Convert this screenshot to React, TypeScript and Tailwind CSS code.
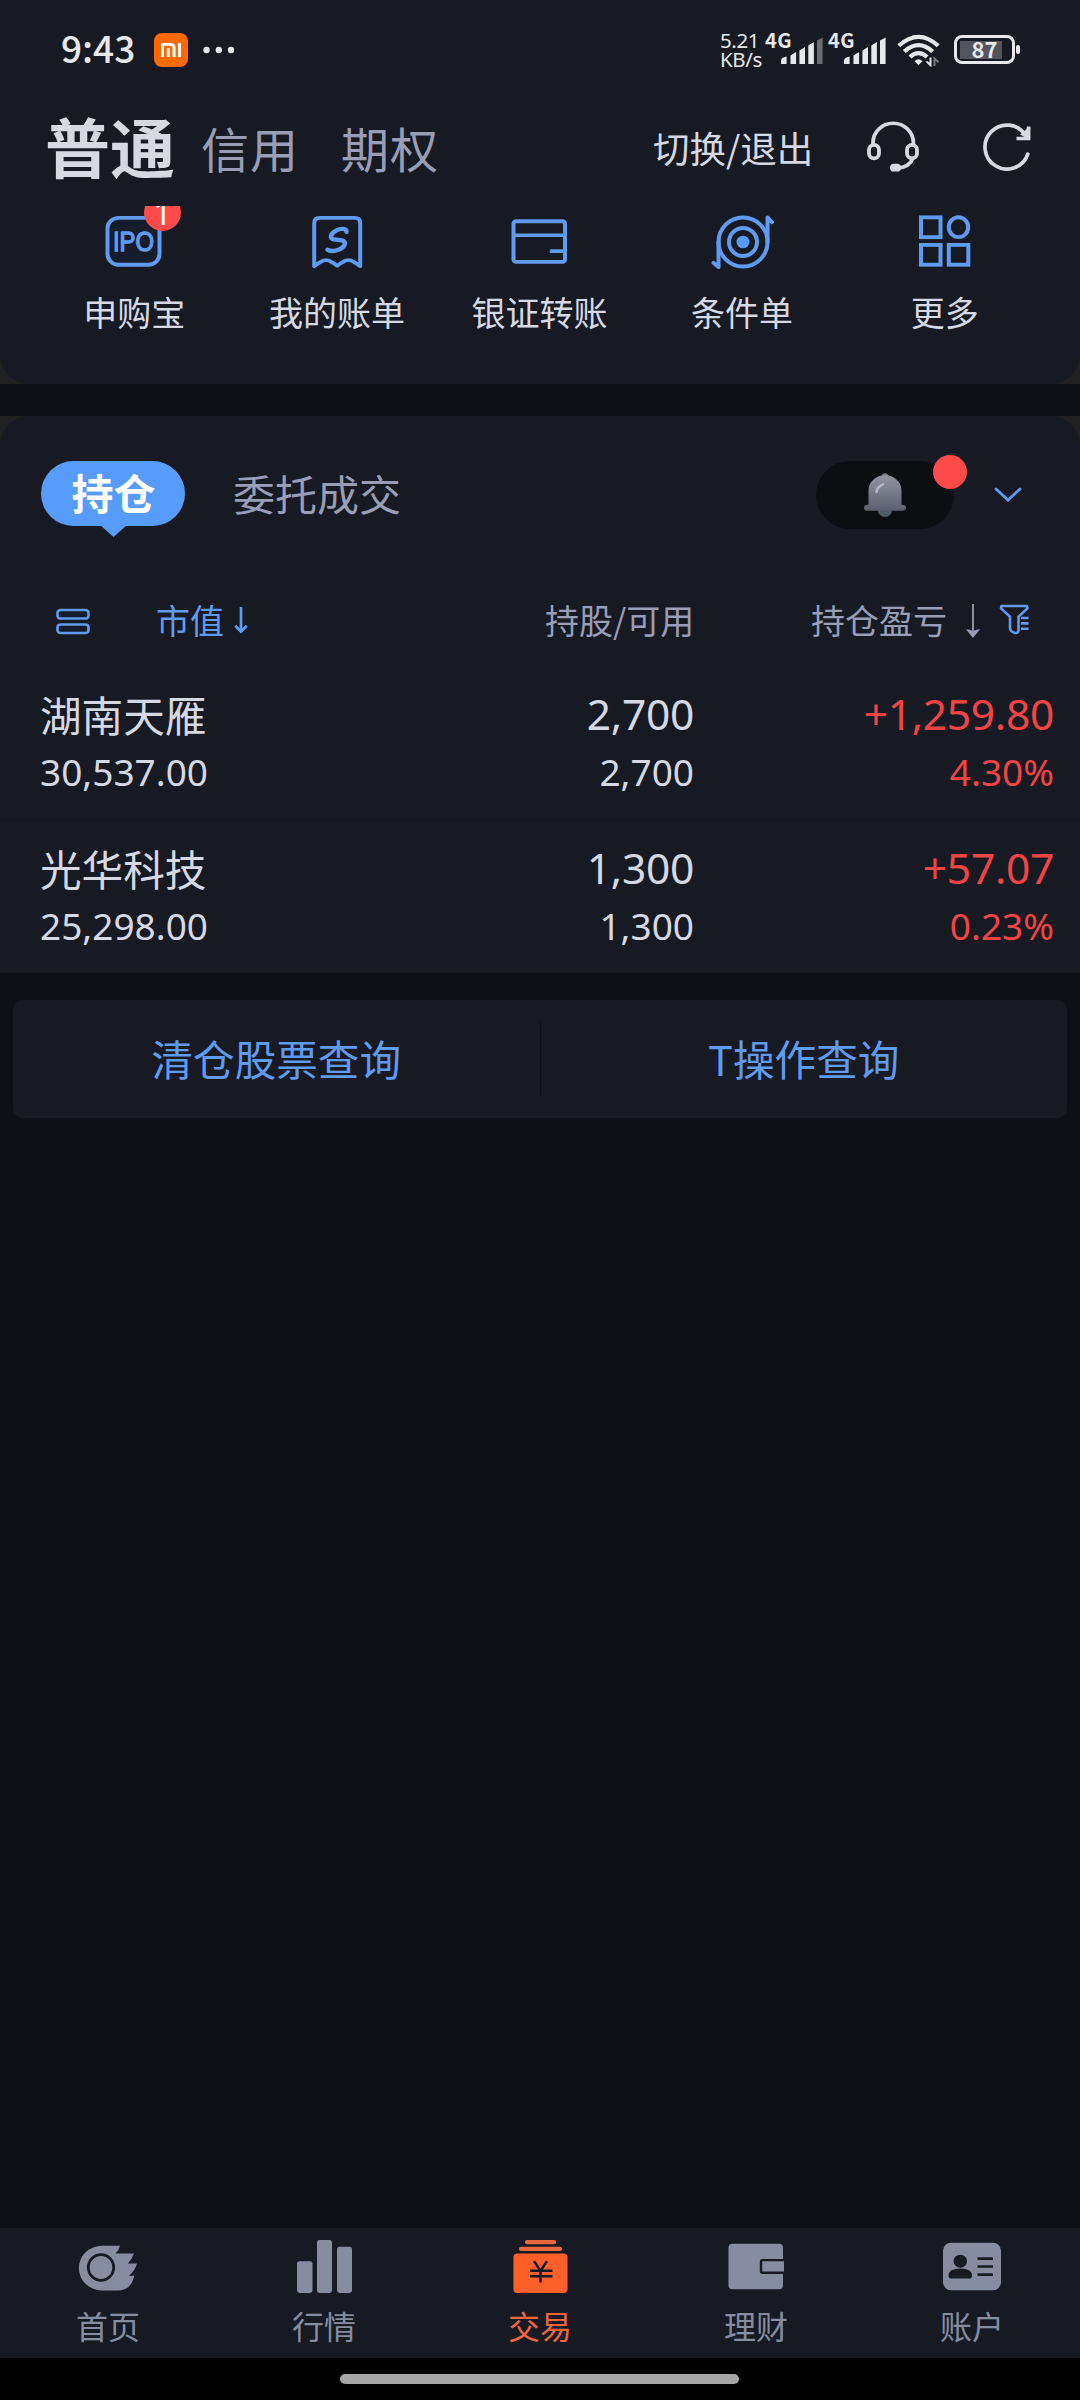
import React from "react";

const BLUE = "#5f9bf0";

const Signal = ({ weak }: { weak?: boolean }) => (
  <div className="relative h-[33px] w-[58px]">
    <span className="absolute left-0 top-[-5px] text-[20px] font-bold leading-[21px] tracking-[0.500px]">4G</span>
    <svg className="absolute inset-0" width="58" height="33" viewBox="0 0 58 33" fill="#e8e8ea">
      <path d="M16 30v-3.500q0-3 5.600-4v7.500z" />
      <path d="M25.500 30v-8.500l5.600-3.500v12z" />
      <path d="M34.400 30v-13.500l5.600-3.500v17z" />
      <path d="M43.300 30v-18.500l5.600-3.500v22z" />
      <path d="M52 30v-23.500l5.600-3v26.500z" fill={weak ? "#6b6c72" : "#e8e8ea"} />
    </svg>
  </div>
);

const StatusBar = () => (
  <div className="flex h-[100px] items-center pl-[61px] text-[#e8e8ea]">
    <span className="w-[93px] pb-[5px] text-[37px] font-medium leading-none">9:43</span>
    <div className="flex h-[34px] w-[34px] items-center justify-center rounded-[8px] bg-[#ff6a00]">
      <svg width="20" height="14" viewBox="0 0 20 15" preserveAspectRatio="none" fill="none" stroke="#fff" strokeWidth="3">
        <path d="M1.500 15V1.500H9.500q3.500 0 3.500 3.500V15M7.300 5.500V15M18.500 0V15" />
      </svg>
    </div>
    <svg className="ml-[15px]" width="32" height="8" viewBox="0 0 32 8" fill="#e8e8ea">
      <circle cx="3.500" cy="4" r="3.200" />
      <circle cx="15.800" cy="4" r="3.200" />
      <circle cx="28" cy="4" r="3.200" />
    </svg>
    <div className="ml-auto flex items-center pr-[60px]">
      <div className="w-[45px] pb-px font-['Noto_Sans',sans-serif] text-[20.500px] leading-[18.500px] tracking-[-0.400px]">
        <div>5.21</div>
        <div>KB/s</div>
      </div>
      <Signal weak />
      <div className="w-[5px]" />
      <Signal />
      <svg className="ml-[11px]" width="44" height="33" viewBox="0 0 44 35" preserveAspectRatio="none" fill="none" stroke="#e8e8ea" strokeWidth="4.300">
        <path d="M1.800 12.500Q21.500-6.500 41.200 12.500" />
        <path d="M7.300 18.500Q21.500 5 35.700 18.500" />
        <path d="M13 24.300Q21.500 16.500 30 24.300" />
        <path d="M17.500 29Q21.500 24.500 25.500 29L21.500 33z" fill="#e8e8ea" stroke="none" />
        <path d="M33.500 25v8l-4-4" strokeWidth="2" />
        <path d="M37.500 34v-8l4 4" stroke="#77787d" strokeWidth="2" />
      </svg>
      <div className="mb-[1px] ml-[13px] flex h-[29px] w-[61px] items-center rounded-[8px] border-[3px] border-[#e8e8ea] p-[3px]">
        <div className="flex h-[18px] w-[42px] items-center justify-center bg-[#53555d]">
          <span className="ml-[7px] pb-[3px] text-[22px] font-bold leading-none">87</span>
        </div>
      </div>
      <div className="mb-[1px] ml-[1px] h-[9px] w-[4px] rounded-[2px] bg-[#e8e8ea]" />
    </div>
  </div>
);

const AccountTabs = () => (
  <div className="mb-[9px] mt-[3px] flex h-[94px] items-center whitespace-nowrap pl-[45px] text-[#d6d9e4]">
    <span className="w-[156px] pb-[9px] text-[65px] font-bold leading-none">普通</span>
    <span className="w-[140px] pb-[6px] text-[48px] leading-none tracking-[1px] text-[#999db6]">信用</span>
    <span className="pb-[6px] text-[48px] leading-none tracking-[1px] text-[#999db6]">期权</span>
    <div className="ml-auto flex items-center pr-[47px]">
      <span className="w-[214px] pb-1 text-[36.500px] leading-none">切换/退出</span>
      <svg className="mb-[7px]" width="52" height="51" viewBox="0 0 52 52.500" preserveAspectRatio="none" fill="none" stroke="#d6d9e4" strokeWidth="3.800">
        <path d="M6 24V22.500a20.200 20.200 0 0 1 40.400 0V24" />
        <rect x="2" y="24.500" width="10" height="14" rx="5" />
        <rect x="40" y="24.500" width="10" height="14" rx="5" />
        <path d="M46 38q-3.500 10-16 10.500" />
        <rect x="23" y="44" width="11" height="8" rx="4" fill="#d6d9e4" stroke="none" />
      </svg>
      <svg className="mb-[6px] ml-[64px]" width="50" height="48" viewBox="0 0 50 48" fill="none" stroke="#d6d9e4" strokeWidth="3.700">
        <path d="M44.800 31.200A22 22 0 1 1 42.500 12.200" strokeLinecap="round" />
        <path d="M45.600 3.500v12H33.500" />
        <path d="M37 11.500l8 4.500V5z" fill="#d6d9e4" stroke="none" />
      </svg>
    </div>
  </div>
);

const shortcuts = [
  {
    label: "申购宝",
    icon: (
      <svg width="70" height="58" viewBox="0 0 70 60" preserveAspectRatio="none" fill="none" stroke={BLUE} strokeWidth="4">
        <rect x="8.500" y="5" width="52" height="48.500" rx="11" fill="#151c2b" />
        <text x="34.500" y="39.500" textAnchor="middle" textLength="41" lengthAdjust="spacingAndGlyphs" fill={BLUE} stroke={BLUE} strokeWidth="1.400" fontSize="28" fontFamily="Liberation Sans">IPO</text>
      </svg>
    ),
  },
  {
    label: "我的账单",
    icon: (
      <svg width="70" height="58" viewBox="0 0 70 60" preserveAspectRatio="none" fill="none" stroke={BLUE} strokeWidth="4" strokeLinejoin="round">
        <path d="M12.200 55V10.500q0-5.500 5.500-5.500h35q5.500 0 5.500 5.500V55q-3-2.500-6.500-4.500-5.500-3.500-10.500 0-3.500 2-6 4-2.500-2-6-4-5-3.500-10.500 0-3.500 2-6.500 4.500z" />
        <path d="M44.500 19.500c0-4-6-3.500-10-1.500-6 3-8 8.500-2 9.500 6 .500 12 .500 10 5.500-2 5-13 8-17 5" strokeWidth="4.500" strokeLinecap="round" />
      </svg>
    ),
  },
  {
    label: "银证转账",
    icon: (
      <svg width="70" height="58" viewBox="0 0 70 60" preserveAspectRatio="none" fill="none" stroke={BLUE} strokeWidth="4" strokeLinecap="round">
        <rect x="9.500" y="8.500" width="51.500" height="42" rx="2.500" />
        <path d="M10 23h51M47.500 39.500H60" strokeWidth="3.800" />
      </svg>
    ),
  },
  {
    label: "条件单",
    icon: (
      <svg width="70" height="58" viewBox="0 0 70 60" preserveAspectRatio="none" fill="none" stroke={BLUE} strokeWidth="4" strokeLinecap="round" strokeLinejoin="round">
        <path d="M11.500 30a24.500 25.300 0 1 0 49 0V4.500l4.500 5" />
        <path d="M60.500 30a24.500 25.300 0 0 0-49 0V56l-5-4.500" />
        <ellipse cx="36" cy="30" rx="14" ry="14.500" />
        <circle cx="36" cy="30" r="6.500" fill="#589cfb" stroke="none" />
      </svg>
    ),
  },
  {
    label: "更多",
    icon: (
      <svg width="70" height="58" viewBox="0 0 70 60" preserveAspectRatio="none" fill="none" stroke={BLUE} strokeWidth="4">
        <rect x="11" y="4.500" width="19.500" height="20.500" />
        <ellipse cx="48.500" cy="14.700" rx="9.700" ry="10.300" />
        <rect x="11" y="33" width="19.500" height="20.500" />
        <rect x="38.800" y="33" width="19.500" height="20.500" />
      </svg>
    ),
  },
];

const Shortcuts = () => (
  <div className="bg-[#212121]">
    <div className="relative grid h-[178px] grid-cols-5 rounded-b-[30px] bg-[#171a23] pl-[33px] pr-[34px]">
      {shortcuts.map((s) => (
        <div key={s.label} className="flex flex-col items-center pt-[7px]">
          {s.icon}
          <span className="mt-[23px] whitespace-nowrap text-[34px] leading-[36px] text-[#d6d9e4]">{s.label}</span>
        </div>
      ))}
      <div className="absolute left-[144px] top-0 h-[25px] w-[37px] overflow-hidden">
        <div className="-mt-[12px] flex h-[37px] w-[37px] items-center justify-center rounded-full bg-[#ff4a4a] font-['Noto_Sans',sans-serif] text-[32px] leading-none text-white">1</div>
      </div>
    </div>
  </div>
);

const HoldingTabs = () => (
  <div className="flex h-[148px] items-start whitespace-nowrap pl-[41px] pt-[45px]">
    <div className="relative flex h-[65px] w-[144px] justify-center rounded-full bg-[#589cfb] pl-px pt-[10px] text-[42px] font-bold leading-[42px] text-white">
      持仓
      <svg className="absolute left-[59px] top-[64px]" width="27" height="12" viewBox="0 0 27 12">
        <path d="M0 0h27L13.500 12z" fill="#589cfb" />
      </svg>
    </div>
    <span className="ml-[48px] pt-[11px] text-[42px] leading-[42px] text-[#999db6]">委托成交</span>
    <div className="relative ml-auto flex h-[68px] w-[138px] justify-center rounded-full bg-[#0c0e12] pt-[12px]">
      <svg width="42" height="44.500" viewBox="0 0 42 47" preserveAspectRatio="none">
        <defs>
          <linearGradient id="bell" x1="0" y1="0" x2="0" y2="1">
            <stop offset="0" stopColor="#92949f" />
            <stop offset="1" stopColor="#5b6070" />
          </linearGradient>
        </defs>
        <ellipse cx="21" cy="39.500" rx="7" ry="7" fill="#4e5a66" />
        <circle cx="21" cy="3.500" r="3.300" fill="#797d85" />
        <path d="M4.500 33.500v-15.500a16.500 15.500 0 0 1 33 0v15.500q4.500 0 4.500 3t-3 3.500H3q-3 0-3-3.500t4.500-3z" fill="url(#bell)" />
        <path d="M12.500 20q.500-5.500 6.500-8" fill="none" stroke="#b6b8c0" strokeWidth="2.600" strokeLinecap="round" />
      </svg>
      <div className="absolute left-[117px] top-[-6px] h-[34px] w-[34px] rounded-full bg-[#ff4a4a]" />
    </div>
    <svg className="ml-[40px] mr-[58px] mt-[26px]" width="28" height="16" viewBox="0 0 28 16" fill="none" stroke={BLUE} strokeWidth="2.800" strokeLinecap="round">
      <path d="M2 2l12 11L26 2" />
    </svg>
  </div>
);

const ColumnHeads = () => (
  <div className="flex h-[114px] items-center whitespace-nowrap pl-[56px] pr-[51px] text-[34px] leading-none text-[#999db6]">
    <svg width="34" height="27" viewBox="0 0 34 28" preserveAspectRatio="none" fill="#151c2b" stroke={BLUE} strokeWidth="2.600">
      <rect x="1.500" y="2" width="31" height="9" rx="3" />
      <rect x="1.500" y="17" width="31" height="9" rx="3" />
    </svg>
    <span className="ml-[66px] w-[77px] pb-[3px] text-[#5f9bf0]">市值</span>
    <svg className="mb-[2px]" width="16" height="28" viewBox="0 0 16 29" fill="none" stroke={BLUE} strokeWidth="2.800">
      <path d="M8 1v25M2 20.500l6 6 6-6" />
    </svg>
    <span className="ml-[296px] w-[266px] pb-[3px]">持股/可用</span>
    <span className="pb-[3px]">持仓盈亏</span>
    <svg className="ml-[19px]" width="14" height="36" viewBox="0 0 14 37" preserveAspectRatio="none" fill="none" stroke="#999db6" strokeWidth="1.800">
      <path d="M7 1v30" />
      <path d="M0 27q4 0 7 2 3-2 7-2l-7 9z" fill="#999db6" stroke="none" />
    </svg>
    <svg className="mb-[3px] ml-auto" width="30" height="31" viewBox="0 0 30 32" preserveAspectRatio="none" fill="none" stroke={BLUE} strokeWidth="2.600" strokeLinejoin="round">
      <path d="M2.500 2h25.500l.500 2.500-9 8.500v14.500q-1 3.500-4.500 2-4-1.500-4-5V13L2 4.500z" />
      <path d="M22 14.500h7.500M22 20h7.500M22 25.500h7.500" />
    </svg>
  </div>
);

const holdings = [
  { name: "湖南天雁", value: "30,537.00", held: "2,700", usable: "2,700", profit: "+1,259.80", rate: "4.30%" },
  { name: "光华科技", value: "25,298.00", held: "1,300", usable: "1,300", profit: "+57.07", rate: "0.23%" },
];

const Figure = ({ large, children }: { large?: boolean; children: React.ReactNode }) => (
  <div
    className={
      large
        ? "font-['Noto_Sans',sans-serif] text-[42.500px] leading-[50px] tracking-[-0.300px]"
        : "mt-[11px] font-['Noto_Sans',sans-serif] text-[37px] leading-[44px]"
    }
  >
    {children}
  </div>
);

const Holdings = () => (
  <div>
    {holdings.map((h) => (
      <div key={h.name} className="flex h-[154px] border-t border-[#0d1015] pl-[40px] pr-[26px] pt-[23px] text-[#d6d9e4] first:h-[141px] first:border-t-0 first:pt-[11px]">
        <div className="w-[400px]">
          <div className="text-[41.600px] leading-[50px]">{h.name}</div>
          <Figure>{h.value}</Figure>
        </div>
        <div className="w-[254px] text-right">
          <Figure large>{h.held}</Figure>
          <Figure>{h.usable}</Figure>
        </div>
        <div className="flex-1 text-right text-[#f24444]">
          <Figure large>{h.profit}</Figure>
          <Figure>{h.rate}</Figure>
        </div>
      </div>
    ))}
  </div>
);

const navItems = [
  {
    label: "首页",
    icon: (
      <svg width="60" height="56" viewBox="0 0 60 58" preserveAspectRatio="none" fill="#868da1">
        <path d="M24 8H42q-1 5-4.500 8H56q-2 6-6.300 10.500H59Q57 34 51 39H56.300Q53 54.300 40 54.300H24A23 23 0 0 1 24 8z" />
        <ellipse cx="23" cy="30.500" rx="12.700" ry="13.300" stroke="#171a23" strokeWidth="2.800" />
      </svg>
    ),
  },
  {
    label: "行情",
    icon: (
      <svg width="60" height="56" viewBox="0 0 60 58" preserveAspectRatio="none" fill="#868da1">
        <rect x="3" y="24" width="15.500" height="33" rx="2.500" />
        <rect x="23" y="2" width="15" height="55" rx="2.500" />
        <rect x="43" y="9" width="15" height="48" rx="2.500" />
      </svg>
    ),
  },
  {
    label: "交易",
    active: true,
    icon: (
      <svg width="60" height="56" viewBox="0 0 60 58" preserveAspectRatio="none" fill="#ff6029">
        <rect x="15" y="2" width="31" height="4.500" rx="2" fill="#e9683d" />
        <rect x="9" y="9" width="43" height="4.500" rx="2" fill="#e9683d" />
        <rect x="3.500" y="16" width="54" height="41" rx="4" />
        <path d="M24 24l6.500 10L37 24M20 34h22.500M20 39.500h22.500M30.500 34v12" fill="none" stroke="#171a23" strokeWidth="2.600" />
      </svg>
    ),
  },
  {
    label: "理财",
    icon: (
      <svg width="60" height="56" viewBox="0 0 60 58" preserveAspectRatio="none" fill="#868da1">
        <rect x="2.500" y="6" width="54.500" height="47" rx="4" />
        <path d="M58 23H36.500q-1.500 0-1.500 1.500v10q0 1.500 1.500 1.500H58" stroke="#171a23" strokeWidth="2.400" />
      </svg>
    ),
  },
  {
    label: "账户",
    icon: (
      <svg width="60" height="56" viewBox="0 0 60 58" preserveAspectRatio="none" fill="#171a23">
        <rect x="1" y="5" width="58" height="49" rx="8" fill="#868da1" />
        <circle cx="18.300" cy="24" r="6.700" />
        <path d="M6.500 39q0-7.500 11.800-7.500T30 39q0 3-3 3H9.500q-3 0-3-3z" />
        <path d="M35.500 21.300H51M35.500 29.500H51M35.500 38H51" stroke="#171a23" strokeWidth="2.800" />
      </svg>
    ),
  },
];

const BottomNav = () => (
  <div className="grid h-[130px] grid-cols-5 bg-[#171a23]">
    {navItems.map((n) => (
      <div key={n.label} className="flex flex-col items-center pt-[10px]">
        {n.icon}
        <span className={n.active ? "mt-[15px] text-[32px] leading-[32px] text-[#ee673a]" : "mt-[15px] text-[32px] leading-[32px] text-[#868da1]"}>{n.label}</span>
      </div>
    ))}
  </div>
);

export default function App() {
  return (
    <div className="flex h-[2400px] w-[1080px] flex-col overflow-hidden bg-[#0d1015] font-['Noto_Sans_CJK_SC',sans-serif]">
      <div className="h-[206px] bg-[#171a23]">
        <StatusBar />
        <AccountTabs />
      </div>
      <Shortcuts />
      <div className="mt-[32px] bg-[#212121]">
        <div className="h-[557px] rounded-t-[30px] bg-[#171a23]">
          <HoldingTabs />
          <ColumnHeads />
          <Holdings />
        </div>
      </div>
      <div className="mx-[13px] mt-[27px] flex h-[118px] items-center rounded-[10px] bg-[#171a23] text-[41.600px] leading-[46px] text-[#5f9bf0]">
        <div className="flex-1 pb-[3px] text-center">清仓股票查询</div>
        <div className="h-[76px] w-px bg-[#0d1015]" />
        <div className="flex-1 pb-[3px] text-center">T操作查询</div>
      </div>
      <div className="mt-auto">
        <BottomNav />
        <div className="flex h-[42px] justify-center bg-black pr-px pt-[16px]">
          <div className="h-[10px] w-[399px] rounded-full bg-[#a5a5a5]" />
        </div>
      </div>
    </div>
  );
}
